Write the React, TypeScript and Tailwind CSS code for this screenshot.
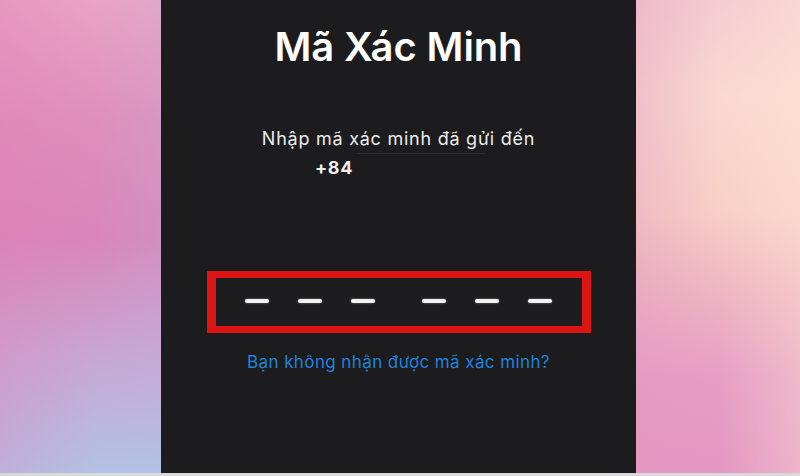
import React from "react";

function Dashes() {
  const dash = <div className="h-[4px] w-[24px] rounded-full bg-[#f2f2f2] shadow-[0_0_2px_rgba(255,255,255,0.5)]" />;
  return (
    <div className="flex items-center justify-center gap-[47px] -mt-[3px]">
      <div className="flex gap-[29px]">
        {dash}
        {dash}
        {dash}
      </div>
      <div className="flex gap-[29px]">
        {dash}
        {dash}
        {dash}
      </div>
    </div>
  );
}

export default function App() {
  return (
    <div className="flex h-[476px] w-[800px] flex-col overflow-hidden font-['Inter','Liberation_Sans',sans-serif]">
      <div className="flex h-[473px] w-full">
        <div className="relative h-full w-[161px] bg-[linear-gradient(180deg,#e9a3c3_0%,#df8fbd_25%,#d985bb_50%,#c9a6d2_75%,#b2c2e4_100%)]">
          <div className="absolute inset-0 bg-[linear-gradient(90deg,rgba(230,120,180,0.25)_0%,rgba(200,160,210,0)_60%,rgba(180,190,230,0.15)_100%)]" />
        </div>
        <div className="flex h-full w-[475px] flex-col items-center bg-[#1c1c1e] text-white">
          <div className="mt-[27px] h-[40px] text-[40px] font-semibold leading-none tracking-[-0.1px]">Mã Xác Minh</div>
          <div className="mt-[63px] h-[18px] text-[18px] leading-none tracking-[0.75px] text-[#ececec]">Nhập mã xác minh đã gửi đến</div>
          <div className="mt-[5px] h-px w-[128px] translate-x-[22px] bg-[#2e2e30]" />
          <div className="mt-[5px] h-[18px] w-full pl-[154px] text-[18px] font-bold leading-none tracking-[0.6px] text-[#f2f2f2]">+84</div>
          <div className="mt-[94px] flex h-[62px] w-[384px] flex-col justify-center border-x-[9px] border-y-[7px] border-[#dc1414] bg-[#1d1d1f]">
            <Dashes />
          </div>
          <div className="mt-[21px] text-[17px] leading-none tracking-[0.4px] text-[#1f82dc]">Bạn không nhận được mã xác minh?</div>
        </div>
        <div className="relative h-full w-[164px] bg-[linear-gradient(180deg,#f4ccd2_0%,#f9d8d0_20%,#f8cfc6_45%,#efb4c2_62%,#e69ec4_80%,#e496c2_100%)]">
          <div className="absolute inset-0 bg-[linear-gradient(90deg,rgba(225,150,190,0.35)_0%,rgba(255,230,210,0)_50%,rgba(255,235,215,0.35)_100%)]" />
        </div>
      </div>
      <div className="h-[3px] w-full bg-[#d9d9d9]" />
    </div>
  );
}
